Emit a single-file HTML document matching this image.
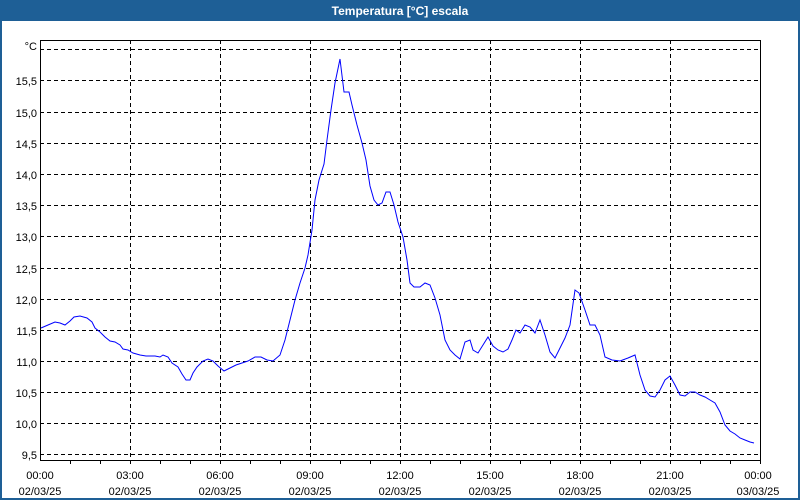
<!DOCTYPE html><html><head><style>
body{margin:0;width:800px;height:500px;overflow:hidden;background:#fff;font-family:"Liberation Sans",sans-serif;}
</style></head><body>
<svg width="800" height="500" xmlns="http://www.w3.org/2000/svg" style="display:block">
<rect x="0" y="0" width="800" height="500" fill="#1e5f96"/>
<rect x="2" y="21" width="796" height="477" fill="#fff"/>
<text x="400" y="15" text-anchor="middle" fill="#fff" font-size="12" font-weight="bold" font-family="Liberation Sans,sans-serif">Temperatura [°C] escala</text>
<g stroke="#000" stroke-dasharray="4,3" stroke-width="1">
<path d="M40 49.5H760M40 80.5H760M40 112.5H760M40 143.5H760M40 174.5H760M40 205.5H760M40 236.5H760M40 268.5H760M40 299.5H760M40 330.5H760M40 361.5H760M40 392.5H760M40 423.5H760M40 454.5H760"/>
<path d="M130.5 40V460M220.5 40V460M310.5 40V460M400.5 40V460M490.5 40V460M580.5 40V460M670.5 40V460"/>
</g>
<path d="M40.5 40V460.5H760.5V40M40 40.5H760" stroke="#000" fill="none"/>
<path d="M70.5 460v4M100.5 460v4M130.5 460v4M160.5 460v4M190.5 460v4M220.5 460v4M250.5 460v4M280.5 460v4M310.5 460v4M340.5 460v4M370.5 460v4M400.5 460v4M430.5 460v4M460.5 460v4M490.5 460v4M520.5 460v4M550.5 460v4M580.5 460v4M610.5 460v4M640.5 460v4M670.5 460v4M700.5 460v4M730.5 460v4M760.5 460v4" stroke="#000"/>
<g font-size="11" fill="#000" text-anchor="end" font-family="Liberation Sans,sans-serif">
<text x="37" y="50">°C</text><text x="37" y="85">15,5</text><text x="37" y="117">15,0</text><text x="37" y="148">14,5</text><text x="37" y="179">14,0</text><text x="37" y="210">13,5</text><text x="37" y="241">13,0</text><text x="37" y="273">12,5</text><text x="37" y="304">12,0</text><text x="37" y="335">11,5</text><text x="37" y="366">11,0</text><text x="37" y="397">10,5</text><text x="37" y="428">10,0</text><text x="37" y="459">9,5</text>
</g>
<g font-size="11" fill="#000" text-anchor="middle" font-family="Liberation Sans,sans-serif">
<text x="40" y="479">00:00</text><text x="40" y="495">02/03/25</text>
<text x="130" y="479">03:00</text><text x="130" y="495">02/03/25</text>
<text x="220" y="479">06:00</text><text x="220" y="495">02/03/25</text>
<text x="310" y="479">09:00</text><text x="310" y="495">02/03/25</text>
<text x="400" y="479">12:00</text><text x="400" y="495">02/03/25</text>
<text x="490" y="479">15:00</text><text x="490" y="495">02/03/25</text>
<text x="580" y="479">18:00</text><text x="580" y="495">02/03/25</text>
<text x="670" y="479">21:00</text><text x="670" y="495">02/03/25</text>
<text x="758" y="479">00:00</text><text x="758" y="495">03/03/25</text>
</g>
<polyline fill="none" stroke="#0000ff" stroke-width="1" points="41,328 48,325 55,322 60,323 65,325 70,321 74,317 80,316 87,318 92,322 95,328 100,332 105,337 110,341 115,342 120,345 123,349 128,350 133,353 140,355 146,356 155,356 160,357 163,355 168,357 172,363 178,367 182,374 186,380 190,380 193,373 197,367 203,361 208,359 213,361 218,366 224,371 230,368 236,365 242,363 248,361 255,357 261,357 267,360 273,361 280,355 285,340 290,320 295,300 300,283 305,268 308,255 312,230 315,200 319,180 324,164 327,140 331,110 335,83 340,59 344,92 349,92 352,105 357,125 362,143 366,160 370,186 374,200 378,205 382,203 386,192 390,192 394,205 398,222 403,237 407,260 410,283 414,287 420,287 425,283 430,285 435,298 440,315 445,340 450,350 455,355 460,359 465,342 470,340 473,350 478,353 483,345 488,337 493,346 498,350 503,352 508,349 512,340 516,330 520,333 525,325 530,327 535,333 540,320 545,335 550,352 555,358 560,348 565,338 570,325 575,290 579,293 585,310 590,325 595,325 600,335 605,357 612,360 620,361 628,358 635,355 640,375 645,390 650,396 655,397 660,390 665,380 670,376 675,385 680,395 685,396 690,392 695,392 700,395 705,397 710,400 715,403 720,412 725,425 730,431 735,434 740,438 745,440 750,442 754,443"/>
</svg>
</body></html>
